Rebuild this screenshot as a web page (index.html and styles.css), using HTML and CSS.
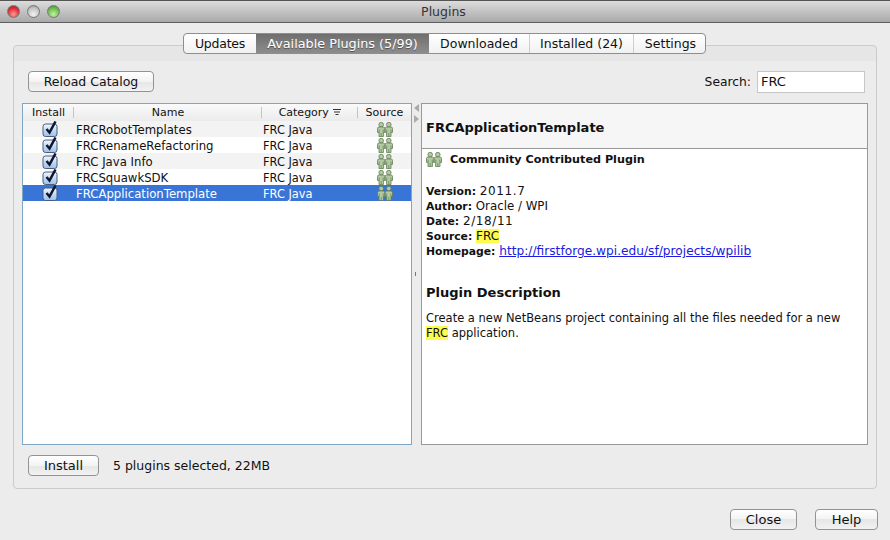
FILE: index.html
```html
<!DOCTYPE html>
<html>
<head>
<meta charset="utf-8">
<title>Plugins</title>
<link rel="stylesheet" href="styles.css">
</head>
<body>

<svg class="defs" width="0" height="0">
  <defs>
    <linearGradient id="boxfill" x1="0" y1="0" x2="0" y2="1">
      <stop offset="0" stop-color="#f2f7fd"/>
      <stop offset="0.5" stop-color="#c4daf3"/>
      <stop offset="1" stop-color="#9cc0ec"/>
    </linearGradient>
    <symbol id="check" viewBox="0 0 16 16">
      <rect x="1" y="3" width="14" height="12.5" rx="2.5" fill="url(#boxfill)" stroke="#4a5c80"/>
      <path d="M4.5 8 L7.5 11.5 L13.5 0.5" fill="none" stroke="#0e1630" stroke-width="2.5"/>
    </symbol>
    <symbol id="people" viewBox="0 0 16 15">
      <g fill="#b4c9a4" stroke="#5f7d52" stroke-width="0.8">
        <circle cx="4.2" cy="2.6" r="2.3"/>
        <path d="M.5 6.6 Q.5 5 2 5 H6.4 Q7.8 5 7.8 6.6 V10.4 H6.4 V14.6 H2 V10.4 H.5 Z"/>
        <circle cx="11.8" cy="2.6" r="2.3"/>
        <path d="M8.2 6.6 Q8.2 5 9.6 5 H14 Q15.5 5 15.5 6.6 V10.4 H14 V14.6 H9.6 V10.4 H8.2 Z"/>
      </g>
      <path d="M2.2 7.5V10.4M6.2 7.5V10.4M4.2 11V14.6M9.8 7.5V10.4M13.8 7.5V10.4M11.8 11V14.6" stroke="#5f7d52" stroke-width="0.7" fill="none"/>
    </symbol>
  </defs>
</svg>

<div class="titlebar">
  <div class="lights">
    <span class="light red"></span>
    <span class="light grey"></span>
    <span class="light green"></span>
  </div>
  <div class="title">Plugins</div>
</div>

<div class="content">
  <div class="tabs">
    <div class="tab tab-updates">Updates</div>
    <div class="tab tab-active">Available Plugins (5/99)</div>
    <div class="tab tab-downloaded">Downloaded</div>
    <div class="tab tab-installed">Installed (24)</div>
    <div class="tab tab-settings">Settings</div>
  </div>

  <div class="panel">
    <div class="toolbar">
      <button class="btn btn-reload">Reload Catalog</button>
      <div class="search">
        <label>Search:</label>
        <div class="search-input">FRC</div>
      </div>
    </div>

    <div class="split">
      <div class="list">
        <table>
          <colgroup>
            <col class="col-install">
            <col class="col-name">
            <col class="col-category">
            <col class="col-source">
          </colgroup>
          <thead>
            <tr>
              <th>Install</th>
              <th>Name</th>
              <th>Category
                <svg class="sort" width="8" height="7" viewBox="0 0 8 7"><path d="M0 .5H8M1 3H7M2.5 5.5H5.5" stroke="#333" fill="none"/></svg>
              </th>
              <th>Source</th>
            </tr>
          </thead>
          <tbody>
            <tr class="odd">
              <td class="c"><svg class="cb"><use href="#check"/></svg></td>
              <td>FRCRobotTemplates</td>
              <td>FRC Java</td>
              <td class="c"><svg class="pp"><use href="#people"/></svg></td>
            </tr>
            <tr>
              <td class="c"><svg class="cb"><use href="#check"/></svg></td>
              <td>FRCRenameRefactoring</td>
              <td>FRC Java</td>
              <td class="c"><svg class="pp"><use href="#people"/></svg></td>
            </tr>
            <tr class="odd">
              <td class="c"><svg class="cb"><use href="#check"/></svg></td>
              <td>FRC Java Info</td>
              <td>FRC Java</td>
              <td class="c"><svg class="pp"><use href="#people"/></svg></td>
            </tr>
            <tr>
              <td class="c"><svg class="cb"><use href="#check"/></svg></td>
              <td>FRCSquawkSDK</td>
              <td>FRC Java</td>
              <td class="c"><svg class="pp"><use href="#people"/></svg></td>
            </tr>
            <tr class="selected">
              <td class="c"><svg class="cb"><use href="#check"/></svg></td>
              <td>FRCApplicationTemplate</td>
              <td>FRC Java</td>
              <td class="c"><svg class="pp"><use href="#people"/></svg></td>
            </tr>
          </tbody>
        </table>
      </div>

      <div class="splitter">
        <span class="arrow arrow-left"></span>
        <span class="arrow arrow-right"></span>
        <span class="grip"></span>
      </div>

      <div class="detail">
        <div class="detail-head">FRCApplicationTemplate</div>
        <div class="detail-body">
          <div class="community">
            <svg class="pp"><use href="#people"/></svg>
            <b>Community Contributed Plugin</b>
          </div>
          <div class="meta">
            <div><b>Version:</b> <span class="num">2011.7</span></div>
            <div><b>Author:</b> <span class="who">Oracle / WPI</span></div>
            <div><b>Date:</b> <span class="num">2/18/11</span></div>
            <div><b>Source:</b> <mark>FRC</mark></div>
            <div><b>Homepage:</b> <a href="#">http://firstforge.wpi.edu/sf/projects/wpilib</a></div>
          </div>
          <h3>Plugin Description</h3>
          <p>Create a new NetBeans project containing all the files needed for a new <mark>FRC</mark> application.</p>
        </div>
      </div>
    </div>

    <div class="statusrow">
      <button class="btn btn-install">Install</button>
      <span class="status">5 plugins selected, 22MB</span>
    </div>
  </div>

  <div class="footer">
    <button class="btn btn-close">Close</button>
    <button class="btn btn-help">Help</button>
  </div>
</div>

</body>
</html>
```

FILE: styles.css
```css
html, body {
   margin: 0;
   padding: 0;
}

body {
   width: 890px;
   height: 540px;
   overflow: hidden;
   background-color: #ececec;
   font-family: "DejaVu Sans", sans-serif;
   font-size: 12px;
   color: #111;
   display: flex;
   flex-direction: column;
}

.defs {
   position: absolute;
}

/* window title */
.titlebar {
   box-sizing: border-box;
   height: 23px;
   flex: none;
   display: flex;
   align-items: center;
   position: relative;
   border-top: 1px solid #555;
   border-bottom: 1px solid #5e5e5e;
   background: linear-gradient(#dcdcdc, #a9a9a9);
}

.lights {
   display: flex;
   gap: 7px;
   padding-left: 7px;
}

.light {
   box-sizing: border-box;
   width: 13px;
   height: 13px;
   border-radius: 50%;
   border: 1px solid #777;
}

.red {
   background: radial-gradient(circle at 50% 75%, #ff9c9c, #e22a32 60%, #a81c22);
}

.grey {
   background: radial-gradient(circle at 50% 75%, #f2f2f2, #c4c4c4 60%, #8c8c8c);
}

.green {
   background: radial-gradient(circle at 50% 75%, #c4f3a0, #6dbb4c 60%, #3f8a30);
}

.title {
   position: absolute;
   left: 0;
   right: 3px;
   text-align: center;
   font-size: 12.5px;
   line-height: 23px;
   color: #333;
}

.content {
   flex: 1;
   padding: 10px 12px 0 13px;
   display: flex;
   flex-direction: column;
}

/* tabs */
.tabs {
   display: flex;
   align-self: flex-start;
   height: 19px;
   margin-left: 170px;
   margin-bottom: -9px;
   position: relative;
   z-index: 1;
   background: linear-gradient(#ffffff, #f1f1f1);
   border: 1px solid #8e8e8e;
   border-radius: 4px;
   font-size: 12.5px;
   line-height: 19px;
}

.tab {
   text-align: center;
   white-space: nowrap;
   box-sizing: border-box;
}

.tab-updates {
   width: 72px;
   letter-spacing: -0.25px;
}

.tab-active {
   width: 173px;
   font-size: 12.8px;
   color: #fff;
   background: linear-gradient(#6f6f6f, #8c8c8c);
   text-shadow: 0 1px 0 #555;
}

.tab-downloaded {
   width: 101px;
   border-right: 1px solid #cfcfcf;
}

.tab-installed {
   width: 104px;
   border-right: 1px solid #cfcfcf;
}

.tab-settings {
   width: 71px;
   padding-left: 2px;
}

/* main panel */
.panel {
   height: 444px;
   margin-right: 1px;
   box-sizing: border-box;
   border: 1px solid #cbcbcb;
   border-radius: 4px;
   padding: 25px 8px 0 8px;
   background: linear-gradient(#e6e6e6 15px, #ececec 15px);
   display: flex;
   flex-direction: column;
}

.toolbar {
   display: flex;
   justify-content: space-between;
   height: 32px;
   padding-left: 6px;
   padding-right: 3px;
}

.btn {
   box-sizing: border-box;
   height: 21px;
   padding: 0;
   border: 1px solid #939393;
   border-radius: 4px;
   background: linear-gradient(#ffffff, #f3f3f3 50%, #e6e6e6 50%, #f2f2f2);
   font-family: "DejaVu Sans", sans-serif;
   font-size: 13px;
   color: #111;
}

.btn-reload {
   width: 126px;
   font-size: 12.5px;
}

.btn-install {
   width: 71px;
}

.btn-close {
   width: 67px;
}

.btn-help {
   width: 63px;
}

.search {
   display: flex;
   gap: 6px;
   font-size: 12.3px;
   line-height: 22px;
   height: 22px;
}

.search-input {
   box-sizing: border-box;
   width: 108px;
   height: 22px;
   padding-left: 3px;
   background: #fff;
   border: 1px solid #c6c6c6;
   font-size: 13px;
   line-height: 20px;
}

.split {
   display: flex;
   height: 342px;
}

/* plugin table */
.list {
   box-sizing: border-box;
   width: 390px;
   height: 342px;
   background: #fff;
   border: 1px solid #7fa7c4;
}

table {
   width: 388px;
   table-layout: fixed;
   border-collapse: collapse;
}

.col-install {
   width: 51px;
}

.col-name {
   width: 188px;
}

.col-category {
   width: 96px;
}

th {
   height: 17px;
   padding: 0 0 1px 0;
   box-sizing: border-box;
   font-size: 11px;
   font-weight: normal;
   text-align: center;
   background: linear-gradient(#c4c4c4, #c4c4c4) right center / 1px 11px no-repeat, linear-gradient(#fafafa, #ebebeb);
}

th:last-child {
   background: linear-gradient(#fafafa, #ebebeb);
}

.sort {
   margin-left: 1px;
}

td {
   height: 15px;
   padding: 1px 0 0 2px;
   font-size: 11.7px;
   white-space: nowrap;
}

td:nth-child(3) {
   padding-left: 1px;
   font-size: 11.4px;
}

td.c {
   height: 16px;
   padding: 0;
   text-align: center;
}

.odd td {
   background: #f3f3f3;
}

.selected td {
   background: #3875d7;
   color: #fff;
}

.cb {
   display: block;
   width: 16px;
   height: 16px;
   margin: 0 0 0 19px;
   overflow: visible;
}

.pp {
   display: block;
   width: 16px;
   height: 15px;
   margin: 0 auto;
}

/* divider between list and details */
.splitter {
   width: 9px;
   flex: none;
   display: flex;
   flex-direction: column;
   align-items: center;
}

.arrow {
   width: 0;
   height: 0;
   border-top: 4px solid transparent;
   border-bottom: 4px solid transparent;
}

.arrow-left {
   margin-top: 1px;
   border-right: 5px solid #aaa;
}

.arrow-right {
   margin-top: 3px;
   border-left: 5px solid #aaa;
}

.grip {
   margin-top: 149px;
   width: 2px;
   height: 4px;
   border-left: 1px solid #777;
}

/* detail pane */
.detail {
   box-sizing: border-box;
   width: 447px;
   height: 342px;
   background: #fff;
   border: 1px solid #999;
}

.detail-head {
   box-sizing: border-box;
   height: 45px;
   padding: 16px 0 0 4px;
   background: #f6f6f6;
   border-bottom: 1px solid #999;
   font-size: 13px;
   font-weight: bold;
}

.detail-body {
   padding: 3px 4px 0 4px;
}

.community {
   display: flex;
   align-items: center;
   gap: 8px;
   height: 15px;
   font-size: 11.2px;
}

.community .pp {
   margin: 0;
}

.meta {
   margin-top: 17px;
   line-height: 15px;
}

.meta b {
   font-size: 10.8px;
}

.num {
   letter-spacing: 0.6px;
}

.who {
   font-size: 11.8px;
}

mark {
   background: #fffb4d;
   color: inherit;
}

a {
   font-size: 12.2px;
   color: #1a1ae0;
}

h3 {
   margin: 25px 0 0 0;
   font-size: 13px;
   line-height: 17px;
}

p {
   margin: 10px 0 0 0;
   font-size: 11.5px;
   line-height: 15px;
   width: 430px;
}

.statusrow {
   display: flex;
   align-items: center;
   gap: 14px;
   padding: 10px 0 0 6px;
}

.status {
   font-size: 12.5px;
}

.footer {
   display: flex;
   justify-content: flex-end;
   gap: 18px;
   padding-top: 20px;
}
```
